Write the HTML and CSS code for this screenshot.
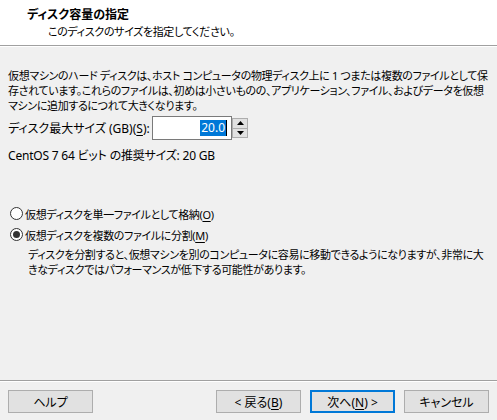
FILE: index.html
```html
<!DOCTYPE html>
<html lang="ja">
<head>
<meta charset="utf-8">
<link rel="stylesheet" href="styles.css">
</head>
<body>
<div class="dialog">
  <div class="header">
    <div class="title">ディスク容量の指定</div>
    <div class="subtitle">このディスクのサイズを指定してください。</div>
  </div>
  <div class="content">
    <p class="para">仮想マシンのハード ディスクは、ホスト コンピュータの物理ディスク上に 1 つまたは複数のファイルとして保<br>存されています。これらのファイルは、初めは小さいものの、アプリケーション、ファイル、およびデータを仮想<br>マシンに追加するにつれて大きくなります。</p>
    <div class="size-row">
      <label class="size-label">ディスク最大サイズ (GB)(<u>S</u>):</label>
      <div class="input"><span class="sel">20.0</span><span class="caret"></span></div>
      <div class="spinner">
        <div class="spin-btn"><svg width="7" height="4" viewBox="0 0 7 4"><path d="M0 4 L3.5 0 L7 4 Z" fill="#000"/></svg></div>
        <div class="spin-btn"><svg width="7" height="4" viewBox="0 0 7 4"><path d="M0 0 L7 0 L3.5 4 Z" fill="#000"/></svg></div>
      </div>
    </div>
    <div class="recommend">CentOS 7 64 ビット の推奨サイズ: 20 GB</div>
    <div class="radios">
      <div class="radio-row"><span class="radio"></span><span>仮想ディスクを単一ファイルとして格納(<u>O</u>)</span></div>
      <div class="radio-row"><span class="radio checked"></span><span>仮想ディスクを複数のファイルに分割(<u>M</u>)</span></div>
      <p class="desc">ディスクを分割すると、仮想マシンを別のコンピュータに容易に移動できるようになりますが、非常に大<br>きなディスクではパフォーマンスが低下する可能性があります。</p>
    </div>
  </div>
  <div class="footer">
    <button class="btn">ヘルプ</button>
    <div class="spacer"></div>
    <button class="btn">&lt; 戻る(<u>B</u>)</button>
    <button class="btn default">次へ(<u>N</u>) &gt;</button>
    <button class="btn">キャンセル</button>
  </div>
</div>
</body>
</html>
```
FILE: styles.css
```css
html, body {
  margin: 0;
  padding: 0;
}
body {
  width: 497px;
  height: 420px;
  overflow: hidden;
  background: #f0f0f0;
  font-family: "Noto Sans", "Noto Sans CJK JP", sans-serif;
  font-size: 11px;
  letter-spacing: -0.35px;
  color: #000;
  font-feature-settings: "palt";
}
.dialog {
  height: 420px;
  display: flex;
  flex-direction: column;
}
.header {
  height: 46px;
  box-sizing: border-box;
  background: #fff;
  border-bottom: 1px solid #a0a0a0;
  padding: 7px 0 0 27px;
}
.title {
  font-size: 12px;
  letter-spacing: 0;
  font-weight: bold;
  line-height: 16px;
}
.subtitle {
  padding-left: 21px;
  margin-top: 1px;
  line-height: 16px;
}
.content {
  flex: 1;
  border-top: 1px solid #fff;
  padding: 0 8px;
}
.para {
  margin: 21px 0 0;
  line-height: 15px;
  white-space: nowrap;
}
.size-row {
  display: flex;
  align-items: center;
  margin-top: 3px;
  height: 24px;
}
.size-label {
  width: 144px;
  font-size: 12px;
  letter-spacing: 0;
  white-space: nowrap;
}
.input {
  width: 80px;
  height: 24px;
  box-sizing: border-box;
  border: 1px solid #7a7a7a;
  background: #fff;
  display: flex;
  align-items: center;
  justify-content: flex-end;
  padding-right: 4px;
  font-size: 12px;
  letter-spacing: 0;
}
.sel {
  background: #0078d7;
  color: #fff;
  line-height: 16px;
  padding: 0 1px;
}
.caret {
  width: 1px;
  height: 16px;
  background: #000;
}
.spinner {
  width: 16px;
  height: 20px;
  display: flex;
  flex-direction: column;
}
.spin-btn {
  flex: 1;
  box-sizing: border-box;
  border: 1px solid #adadad;
  background: #e1e1e1;
  display: flex;
  align-items: center;
  justify-content: center;
}
.spin-btn + .spin-btn {
  border-top: none;
}
.recommend {
  margin-top: 8px;
  line-height: 15px;
  font-size: 12px;
  letter-spacing: -0.2px;
}
.radios {
  margin-top: 40px;
}
.radio-row {
  display: flex;
  align-items: center;
  height: 21px;
  gap: 2px;
}
.radio {
  width: 13px;
  height: 13px;
  box-sizing: border-box;
  border: 1px solid #333;
  border-radius: 50%;
  background: #fff;
  margin-left: 2px;
  display: flex;
  align-items: center;
  justify-content: center;
}
.radio.checked::after {
  content: "";
  width: 7px;
  height: 7px;
  border-radius: 50%;
  background: #333;
}
.desc {
  margin: 2px 0 0 20px;
  line-height: 15px;
  white-space: nowrap;
}
.footer {
  height: 40px;
  box-sizing: border-box;
  border-top: 1px solid #a0a0a0;
  box-shadow: inset 0 1px 0 #fff;
  padding: 9px 8px 0;
  display: flex;
  align-items: flex-start;
  gap: 9px;
}
.spacer {
  flex: 1;
}
.btn {
  width: 85px;
  height: 23px;
  box-sizing: border-box;
  border: 1px solid #adadad;
  background: #e1e1e1;
  font: inherit;
  font-size: 12px;
  letter-spacing: 0;
  color: #000;
  padding: 0;
  margin: 0;
}
.btn.default {
  border: 2px solid #0078d7;
}
u {
  text-decoration-thickness: 1px;
  text-underline-offset: 2px;
}
```
